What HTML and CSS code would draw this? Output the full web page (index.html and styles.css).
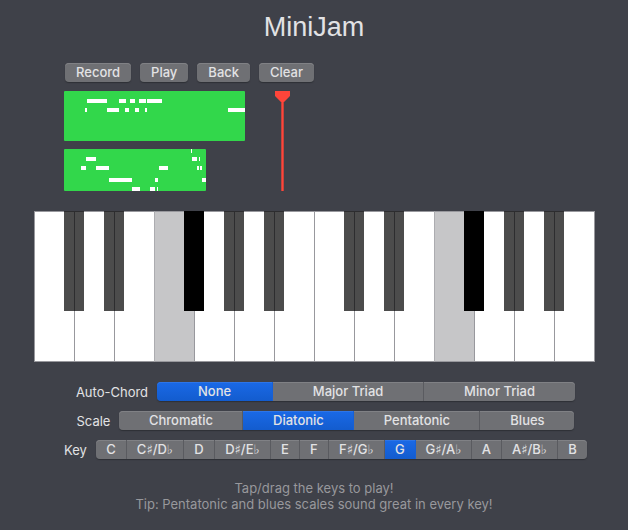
FILE: index.html
```html
<!DOCTYPE html>
<html lang="en">
<head>
<meta charset="utf-8">
<title>MiniJam</title>
<link rel="stylesheet" href="styles.css">
</head>
<body>
<main class="app">
  <h1 class="title">MiniJam</h1>

  <section class="recorder">
    <div class="toolbar">
      <button class="button" type="button">Record</button>
      <button class="button" type="button">Play</button>
      <button class="button" type="button">Back</button>
      <button class="button" type="button">Clear</button>
    </div>
    <div class="timeline">
      <svg class="clip" width="181" height="50" shape-rendering="crispEdges">
        <path d="M23 8h20v4h-20zM55 8h7v4h-7zM66 8h5v4h-5zM75 8h7v4h-7zM83 8h15v4h-15zM21 17h2v4h-2zM43 17h12v4h-12zM61 17h4v4h-4zM71 17h4v4h-4zM81 17h2v4h-2zM164 17h17v4h-17z"/>
      </svg>
      <svg class="clip" width="142" height="42" shape-rendering="crispEdges">
        <path d="M127 0h1v4h-1zM22 8h10v4h-10zM128 8h5v4h-5zM135 8h1v4h-1zM17 17h5v4h-5zM32 17h13v4h-13zM95 17h9v4h-9zM133 17h2v4h-2zM136 17h2v4h-2zM45 29h23v4h-23zM91 29h3v4h-3zM138 29h4v4h-4zM68 38h8v4h-8zM86 38h5v4h-5zM93 38h1v4h-1z"/>
      </svg>
      <svg class="playhead" width="15" height="100">
        <path class="playhead-edge" d="M6 8h3v92h-3z"/>
        <path class="playhead-core" d="M0 0h15v5l-6 6h-1v89h-1v-89h-1l-6-6z"/>
      </svg>
    </div>
  </section>

  <section class="piano" aria-label="Keyboard">
    <div class="slot"><button class="white" type="button" aria-label="C"></button><button class="black" type="button" aria-label="C sharp"></button></div>
    <div class="slot"><button class="white" type="button" aria-label="D"></button><button class="black" type="button" aria-label="D sharp"></button></div>
    <div class="slot"><button class="white" type="button" aria-label="E"></button></div>
    <div class="slot"><button class="white out" type="button" aria-label="F"></button><button class="black in" type="button" aria-label="F sharp"></button></div>
    <div class="slot"><button class="white" type="button" aria-label="G"></button><button class="black" type="button" aria-label="G sharp"></button></div>
    <div class="slot"><button class="white" type="button" aria-label="A"></button><button class="black" type="button" aria-label="A sharp"></button></div>
    <div class="slot"><button class="white" type="button" aria-label="B"></button></div>
    <div class="slot"><button class="white" type="button" aria-label="High C"></button><button class="black" type="button" aria-label="High C sharp"></button></div>
    <div class="slot"><button class="white" type="button" aria-label="High D"></button><button class="black" type="button" aria-label="High D sharp"></button></div>
    <div class="slot"><button class="white" type="button" aria-label="High E"></button></div>
    <div class="slot"><button class="white out" type="button" aria-label="High F"></button><button class="black in" type="button" aria-label="High F sharp"></button></div>
    <div class="slot"><button class="white" type="button" aria-label="High G"></button><button class="black" type="button" aria-label="High G sharp"></button></div>
    <div class="slot"><button class="white" type="button" aria-label="High A"></button><button class="black" type="button" aria-label="High A sharp"></button></div>
    <div class="slot"><button class="white" type="button" aria-label="High B"></button></div>
  </section>

  <section class="settings">
    <div class="setting" role="radiogroup" aria-labelledby="chord-name">
      <span class="name" id="chord-name">Auto-Chord</span>
      <div class="segments chord">
        <label class="segment"><input type="radio" name="chord" checked>None</label>
        <label class="segment"><input type="radio" name="chord">Major Triad</label>
        <label class="segment"><input type="radio" name="chord">Minor Triad</label>
      </div>
    </div>
    <div class="setting" role="radiogroup" aria-labelledby="scale-name">
      <span class="name" id="scale-name">Scale</span>
      <div class="segments scale">
        <label class="segment"><input type="radio" name="scale">Chromatic</label>
        <label class="segment"><input type="radio" name="scale" checked>Diatonic</label>
        <label class="segment"><input type="radio" name="scale">Pentatonic</label>
        <label class="segment"><input type="radio" name="scale">Blues</label>
      </div>
    </div>
    <div class="setting" role="radiogroup" aria-labelledby="key-name">
      <span class="name" id="key-name">Key</span>
      <div class="segments key">
        <label class="segment"><input type="radio" name="key">C</label>
        <label class="segment"><input type="radio" name="key">C♯/D♭</label>
        <label class="segment"><input type="radio" name="key">D</label>
        <label class="segment"><input type="radio" name="key">D♯/E♭</label>
        <label class="segment"><input type="radio" name="key">E</label>
        <label class="segment"><input type="radio" name="key">F</label>
        <label class="segment"><input type="radio" name="key">F♯/G♭</label>
        <label class="segment"><input type="radio" name="key" checked>G</label>
        <label class="segment"><input type="radio" name="key">G♯/A♭</label>
        <label class="segment"><input type="radio" name="key">A</label>
        <label class="segment"><input type="radio" name="key">A♯/B♭</label>
        <label class="segment"><input type="radio" name="key">B</label>
      </div>
    </div>
  </section>

  <p class="tips">Tap/drag the keys to play!<br>Tip: Pentatonic and blues scales sound great in every key!</p>
</main>
</body>
</html>
```
FILE: styles.css
```css
* {
  box-sizing: border-box;
}

body {
  margin: 0;
  background: #3f4149;
  color: #e2e2e4;
  font: 13px/16px Inter, "DejaVu Sans", sans-serif;
}

.app {
  display: flex;
  flex-direction: column;
  align-items: center;
  padding: 10px 8px;
}

.title {
  margin: 0;
  font-family: "Liberation Sans", sans-serif;
  font-size: 27px;
  line-height: 34px;
  font-weight: 400;
}

.recorder {
  width: 100%;
  max-width: 500px;
  margin-top: 19px;
}

.toolbar {
  display: flex;
  gap: 9px;
  padding-left: 1px;
}

.button {
  height: 19px;
  padding: 0 11px;
  border: 0;
  border-radius: 4px;
  background: #6f7074;
  box-shadow: inset 0 1px #808185, 0 1px 1px #2e3036;
  color: inherit;
  font: inherit;
  line-height: 19px;
  font-weight: 500;
}

.timeline {
  position: relative;
  display: flex;
  flex-direction: column;
  gap: 8px;
  margin-top: 9px;
}

.clip {
  display: block;
  border-radius: 1px;
  background: #32d74b;
  fill: #fff;
}

.playhead {
  position: absolute;
  top: 0;
  left: 211px;
}

.playhead-edge {
  fill: #c5423b;
}

.playhead-core {
  fill: #ff453a;
}

.piano {
  display: flex;
  width: 100%;
  max-width: 561px;
  margin-top: 20px;
  border-right: 1px solid #98989d;
}

.slot {
  position: relative;
  flex: 1;
  height: 151px;
}

.white {
  display: block;
  width: 100%;
  height: 100%;
  padding: 0;
  border: 1px solid #98989d;
  border-right: 0;
  background: #fff;
}

.white.out {
  border-left-color: #acacb0;
  background: #c6c6c8;
}

.black {
  position: absolute;
  z-index: 1;
  top: 0;
  right: -10px;
  width: 20px;
  height: 100px;
  padding: 0;
  border: 0;
  background: rgba(0, 0, 0, 0.7);
}

.black.in {
  background: #000;
}

.settings {
  display: flex;
  flex-direction: column;
  align-items: center;
  gap: 10px;
  margin-top: 20px;
  padding-left: 23px;
}

.setting {
  display: flex;
  align-items: center;
  gap: 9px;
}

.name {
  padding-top: 2px;
  line-height: 17px;
}

.segments {
  display: grid;
  border-radius: 4px;
  box-shadow: 0 1px 1px #2e3036;
  font-weight: 500;
}

.chord {
  grid-template-columns: 116px 151px 151px;
}

.scale {
  grid-template-columns: 124px 111px 126px 94px;
}

.key {
  grid-template-columns: 31px 57px 31px 56px 29px 29px 56px 31px 56px 30px 56px 29px;
}

.segment {
  position: relative;
  height: 19px;
  border-right: 1px solid #5a5b60;
  background: #6f7074;
  box-shadow: inset 0 1px #808185;
  line-height: 19px;
  text-align: center;
  white-space: nowrap;
}

.segment:first-child {
  border-radius: 4px 0 0 4px;
}

.segment:last-child {
  border-right: 0;
  border-radius: 0 4px 4px 0;
}

.segment:has(:checked) {
  border-right-color: #1660d6;
  background: linear-gradient(#1a69e6, #135cce);
  box-shadow: inset 0 1px #2d75e8;
}

.segment input {
  position: absolute;
  inset: 0;
  margin: 0;
  opacity: 0;
}

.tips {
  margin: 21px 0 0;
  color: #98989c;
  text-align: center;
}
```
